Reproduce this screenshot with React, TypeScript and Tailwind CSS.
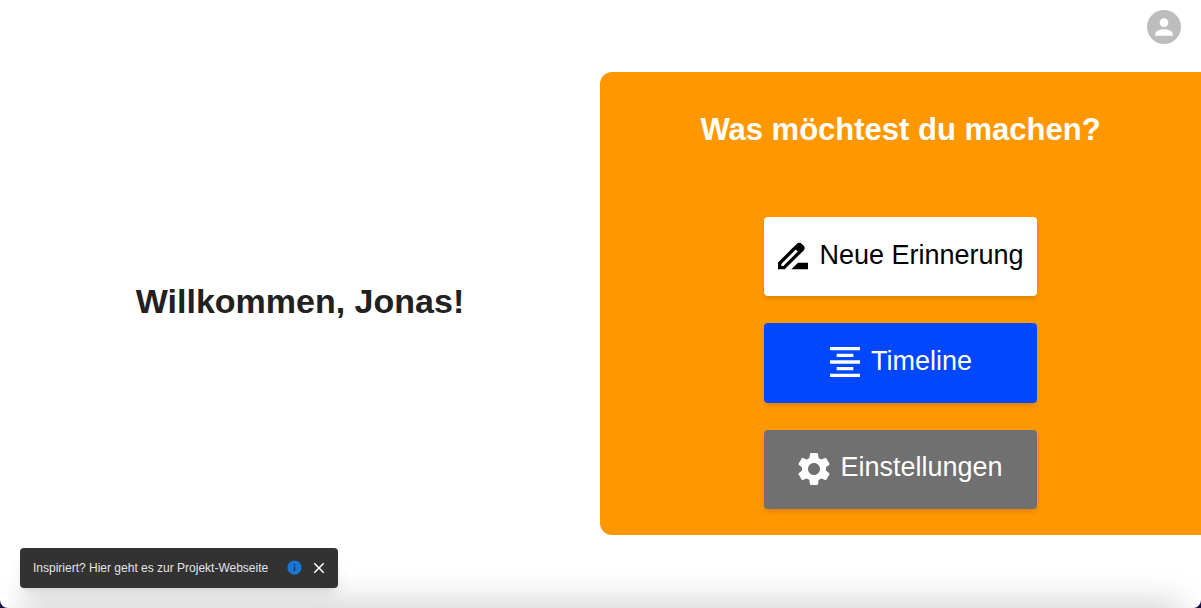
const font = "font-['Liberation_Sans',Arial,sans-serif]";

const Icon = ({ d, className }: { d: string; className: string }) => (
  <svg viewBox="0 0 24 24" fill="currentColor" className={className}>
    <path d={d} />
  </svg>
);

const penPath =
  'M18.41 5.8L17.2 4.59c-.78-.78-2.05-.78-2.83 0l-2.68 2.68L3 15.96V20h4.04l8.74-8.74 2.63-2.63c.79-.78.79-2.05 0-2.83zM6.21 18H5v-1.21l8.66-8.66 1.21 1.21L6.21 18zM11 20l4-4h6v4H11z';
const alignPath = 'M7 15v2h10v-2H7zm-4 6h18v-2H3v2zm0-8h18v-2H3v2zm4-6v2h10V7H7zM3 3v2h18V3H3z';
const gearPath =
  'M19.14 12.94c.04-.3.06-.61.06-.94 0-.32-.02-.64-.07-.94l2.03-1.58c.18-.14.23-.41.12-.61l-1.92-3.32c-.12-.22-.37-.29-.59-.22l-2.39.96c-.5-.38-1.03-.7-1.62-.94l-.36-2.54c-.04-.24-.24-.41-.48-.41h-3.84c-.24 0-.43.17-.47.41l-.36 2.54c-.59.24-1.13.57-1.62.94l-2.39-.96c-.22-.08-.47 0-.59.22L2.74 8.87c-.12.21-.08.47.12.61l2.03 1.58c-.05.3-.09.63-.09.94s.02.64.07.94l-2.03 1.58c-.18.14-.23.41-.12.61l1.92 3.32c.12.22.37.29.59.22l2.39-.96c.5.38 1.03.7 1.62.94l.36 2.54c.05.24.24.41.48.41h3.84c.24 0 .44-.17.47-.41l.36-2.54c.59-.24 1.13-.56 1.62-.94l2.39.96c.22.08.47 0 .59-.22l1.92-3.32c.12-.22.07-.47-.12-.61l-2.01-1.58zM12 15.6c-1.98 0-3.6-1.62-3.6-3.6s1.62-3.6 3.6-3.6 3.6 1.62 3.6 3.6-1.62 3.6-3.6 3.6z';
const personPath = 'M12 12c2.21 0 4-1.79 4-4s-1.79-4-4-4-4 1.79-4 4 1.79 4 4 4zm0 2c-2.67 0-8 1.34-8 4v2h16v-2c0-2.66-5.33-4-8-4z';
const infoPath = 'M12 2C6.48 2 2 6.48 2 12s4.48 10 10 10 10-4.48 10-10S17.52 2 12 2zm1 15h-2v-6h2v6zm0-8h-2V7h2v2z';
const closePath = 'M19 6.41 17.59 5 12 10.59 6.41 5 5 6.41 10.59 12 5 17.59 6.41 19 12 13.41 17.59 19 19 17.59 13.41 12z';

export default function App() {
  return (
    <div className={`${font} relative h-[608px] w-[1201px] overflow-hidden bg-white`}>
      <div className="flex h-[72px] items-start justify-end pt-[10px] pr-[20px]">
        <div className="flex h-[34px] w-[34px] items-center justify-center rounded-full bg-[#bdbdbd] text-white">
          <Icon d={personPath} className="h-[26px] w-[26px]" />
        </div>
      </div>

      <div className="flex h-[463px]">
        <div className="flex w-[600px] items-center justify-center pb-[4px]">
          <h1 className="text-[34px] font-bold text-[#212121]">Willkommen, Jonas!</h1>
        </div>
        <div className="flex flex-1 flex-col items-center rounded-l-xl bg-[#ff9800] pt-[38px]">
          <h2 className="text-[31px] leading-[40px] font-bold text-white">Was möchtest du machen?</h2>
          <div className="mt-[67px] flex flex-col gap-[27px]">
            <button className="flex h-[79px] w-[273px] items-center justify-center gap-[6px] rounded bg-white pr-[4px] pb-[2px] text-[27px] text-black shadow-md">
              <Icon d={penPath} className="h-[40px] w-[40px]" />
              <span>Neue Erinnerung</span>
            </button>
            <button className="flex h-[80px] w-[273px] items-center justify-center gap-[6px] rounded bg-[#0047ff] pr-[4px] pb-[2px] text-[27px] text-white shadow-md">
              <Icon d={alignPath} className="h-[40px] w-[40px]" />
              <span className="pb-[2px]">Timeline</span>
            </button>
            <button className="flex h-[79px] w-[273px] items-center justify-center gap-[6px] rounded bg-[#707070] pr-[4px] pb-[2px] text-[27px] text-white shadow-md">
              <Icon d={gearPath} className="h-[40px] w-[40px]" />
              <span className="pb-[2px]">Einstellungen</span>
            </button>
          </div>
        </div>
      </div>

      {/* soft shade along the bottom edge, fades out towards the corners */}
      <div className="absolute right-[24px] bottom-[-30px] left-[24px] h-[30px] shadow-[0_0_36px_4px_rgba(0,0,0,0.2)]" />

      <div className="absolute bottom-0 left-0 h-[10px] w-[8px] bg-[#170c4a]">
        <div className="h-full w-full rounded-bl-[10px] bg-white" />
      </div>
      <div className="absolute right-0 bottom-0 h-[10px] w-[8px] bg-[#170c4a]">
        <div className="h-full w-full rounded-br-[10px] bg-white" />
      </div>

      <div className="absolute top-[548px] left-[20px] flex h-[40px] w-[318px] items-center rounded bg-[#323232] pr-[10px] pb-[1px] pl-[13px] text-white shadow-lg">
        <span className="flex-1 text-[12px] text-[#e4e4e4]">Inspiriert? Hier geht es zur Projekt-Webseite</span>
        <Icon d={infoPath} className="h-[17px] w-[17px] text-[#1976d2]" />
        <Icon d={closePath} className="ml-[7px] h-[18px] w-[18px] text-white" />
      </div>
    </div>
  );
}
